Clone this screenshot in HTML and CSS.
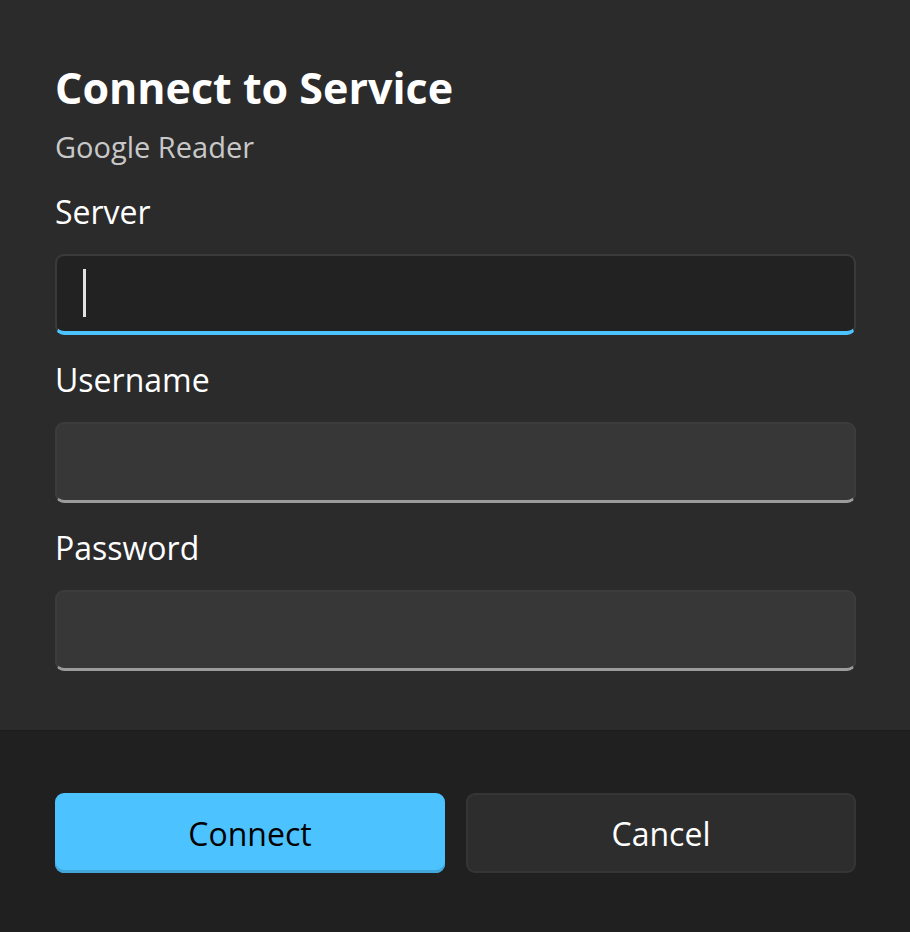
FILE: index.html
```html
<!DOCTYPE html>
<html lang="en">
<head>
<meta charset="utf-8">
<title>Connect to Service</title>
<link rel="stylesheet" href="styles.css">
</head>
<body>
<div class="dialog">
  <div class="content">
    <h1 class="title">Connect to Service</h1>
    <div class="subtitle">Google Reader</div>
    <label class="label">Server</label>
    <div class="field focused"><span class="caret"></span></div>
    <label class="label">Username</label>
    <div class="field"></div>
    <label class="label">Password</label>
    <div class="field"></div>
  </div>
  <div class="footer">
    <button class="btn primary">Connect</button>
    <button class="btn">Cancel</button>
  </div>
</div>
</body>
</html>
```
FILE: styles.css
```css
html, body {
  margin: 0;
  padding: 0;
  height: 100%;
}
body {
  background: #2b2b2b;
  font-family: "Open Sans", "Noto Sans", sans-serif;
  color: #ffffff;
}
.dialog {
  display: flex;
  flex-direction: column;
  height: 932px;
}
.content {
  padding: 60px 54px 59px 55px;
  display: flex;
  flex-direction: column;
}
.title {
  margin: 0;
  font-size: 43px;
  font-weight: 700;
  line-height: 56px;
}
.subtitle {
  margin-top: 11px;
  font-size: 29px;
  line-height: 40px;
  color: #c8c8c8;
}
.label {
  display: block;
  font-size: 32px;
  line-height: 44px;
  margin-top: 23px;
  margin-bottom: 20px;
}
.field {
  box-sizing: border-box;
  height: 81px;
  border-radius: 9px;
  background: #373737;
  border: 2px solid #3c3c3c;
  border-bottom: 3px solid #9c9c9c;
  position: relative;
}
.field.focused {
  background: #222222;
  border: 2px solid #3a3a3a;
  border-bottom: 4px solid #4cc2ff;
}
.caret {
  position: absolute;
  left: 26px;
  top: 13px;
  width: 3px;
  height: 48px;
  background: #e2e2e2;
}
.footer {
  flex: 1;
  background: #202020;
  border-top: 1px solid #1c1c1c;
  padding: 62px 54px 0 55px;
  display: flex;
  gap: 21px;
  align-items: flex-start;
}
.btn {
  flex: none;
  width: 390px;
  height: 80px;
  border-radius: 9px;
  font-family: "Open Sans", "Noto Sans", sans-serif;
  font-size: 32px;
  color: #ffffff;
  background: #2d2d2d;
  border: 2px solid #353535;
  box-sizing: border-box;
  padding: 0;
}
.btn.primary {
  background: #4cc2ff;
  color: #000000;
  border: none;
  box-shadow: inset 0 -3px 0 #42a6db;
}
```
